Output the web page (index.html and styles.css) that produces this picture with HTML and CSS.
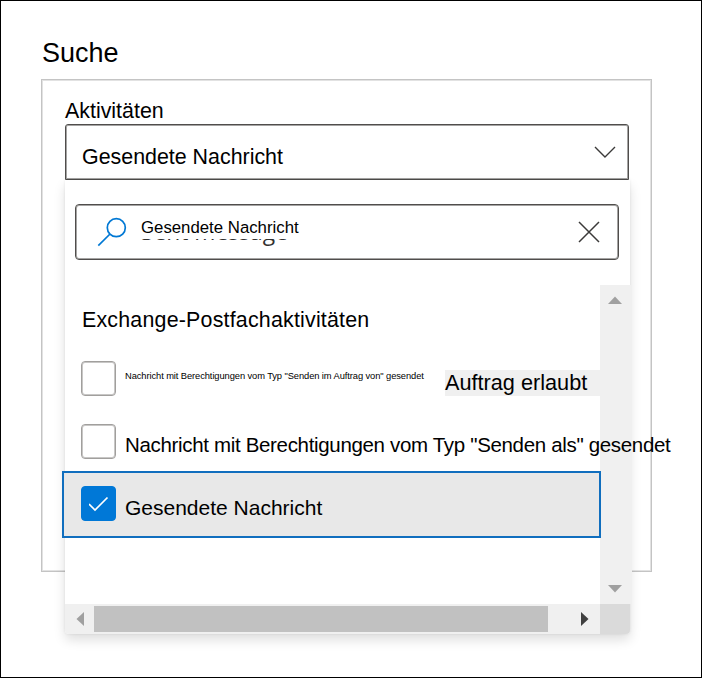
FILE: index.html
```html
<!DOCTYPE html>
<html lang="de">
<head>
<meta charset="utf-8">
<title>Suche</title>
<link rel="stylesheet" href="styles.css">
</head>
<body>
<main class="page">
  <h1 class="title">Suche</h1>
  <section class="card">
    <div class="label">Aktivitäten</div>
    <div class="field">
      <div class="select">
        <span class="select-value">Gesendete Nachricht</span>
        <svg class="chevron" width="22" height="12" viewBox="0 0 22 12"><path d="M1 1l10 10L21 1"/></svg>
      </div>
      <div class="menu">
        <div class="search">
          <svg class="lens" width="30" height="30" viewBox="0 0 30 30"><circle cx="19.3" cy="10.7" r="9"/><path d="M13 17L1.3 28.7"/></svg>
          <div class="search-text">
            <span class="query">Gesendete Nachricht</span>
            <span class="ghost"><span class="ghost-text">Sent message</span></span>
          </div>
          <svg class="close" width="22" height="22" viewBox="0 0 22 22"><path d="M1 1l20 20M21 1L1 21"/></svg>
        </div>
        <div class="body">
          <div class="list">
            <div class="group">Exchange-Postfachaktivitäten</div>
            <div class="row">
              <span class="box"></span>
              <span class="text small">Nachricht mit Berechtigungen vom Typ "Senden im Auftrag von" gesendet</span>
              <span class="tag">Auftrag erlaubt</span>
            </div>
            <div class="row">
              <span class="box"></span>
              <span class="text long">Nachricht mit Berechtigungen vom Typ "Senden als" gesendet</span>
            </div>
            <div class="row selected">
              <span class="box checked"><svg width="20" height="16" viewBox="0 0 20 16"><path d="M0 8l6 6L18.5 1.5"/></svg></span>
              <span class="text chosen">Gesendete Nachricht</span>
            </div>
          </div>
          <div class="vbar">
            <svg width="14" height="8" viewBox="0 0 14 8"><path d="M0 8L7 0.5L14 8z"/></svg>
            <svg width="14" height="8" viewBox="0 0 14 8"><path d="M0 0h14L7 7.5z"/></svg>
          </div>
        </div>
        <div class="hbar">
          <svg class="left" width="8" height="14" viewBox="0 0 8 14"><path d="M8 0v14L0.5 7z"/></svg>
          <div class="thumb"></div>
          <svg class="right" width="8" height="14" viewBox="0 0 8 14"><path d="M0 0v14L7.5 7z"/></svg>
          <div class="corner"></div>
        </div>
      </div>
    </div>
  </section>
</main>
</body>
</html>
```
FILE: styles.css
```css
* { box-sizing: border-box; }
body {
  margin: 0;
  background: #fff;
  color: #000;
  font-family: "Liberation Sans", Arial, sans-serif;
  font-size: 21.4px;
  white-space: nowrap;
}
svg { display: block; flex: none; fill: none; }
.page {
  height: 678px;
  border: 1px solid #000;
  padding: 37px 49px 0 40px;
  overflow: hidden;
}
.title {
  margin: 0 0 10px 1px;
  font-size: 27px;
  font-weight: 400;
  line-height: 31px;
}
.card {
  height: 493px;
  border: 1px solid #c4c4c4;
  box-shadow: inset 0 0 0 1px #e2e2e2;
  padding: 19px 22px 0 23px;
}
.label { height: 25px; line-height: 25px; }
.field { position: relative; }
.select {
  height: 56px;
  border: 1px solid #504e4c;
  box-shadow: inset 0 0 0 1px #a5a4a3;
  border-radius: 3px 3px 0 0;
  padding: 0 12px 0 16px;
  display: flex;
  justify-content: space-between;
}
.select-value { line-height: 64px; }
.chevron { margin-top: 21px; stroke: #3b3a39; stroke-width: 1.4; }
.menu {
  position: absolute;
  left: 0;
  top: 56px;
  width: 565px;
  height: 454px;
  background: #fff;
  border-radius: 0 0 4px 4px;
  box-shadow: 0 6px 12px rgba(0, 0, 0, .13), 0 0 3px rgba(0, 0, 0, .08);
}
.menu::before { content: ""; display: block; height: 24px; }
.search {
  margin: 0 11px 0 10px;
  height: 56px;
  border: 1px solid #504e4c;
  box-shadow: inset 0 0 0 1px #a5a4a3;
  border-radius: 4px;
  display: flex;
  padding: 0 18px 0 21px;
}
.lens { margin-top: 12px; stroke: #0078d4; stroke-width: 1.7; }
.search-text { margin-left: 14px; flex: 1; }
.query {
  display: block;
  height: 34px;
  font-size: 16.8px;
  line-height: 46px;
}
.ghost {
  display: block;
  height: 16px;
  overflow: hidden;
}
.ghost-text {
  display: block;
  margin-top: -7px;
  color: #323130;
  font: 22.8px/0 "Open Sans", sans-serif;
}
.close { margin-top: 16px; stroke: #3b3a39; stroke-width: 1.5; }
.body { display: flex; height: 319px; margin-top: 25px; }
.list { width: 535px; position: relative; z-index: 1; }
.group {
  height: 62px;
  padding-left: 17px;
  line-height: 70px;
  letter-spacing: .2px;
}
.row { display: flex; height: 63px; padding-left: 16px; }
.box {
  flex: none;
  width: 35px;
  height: 35px;
  margin-top: 14px;
  border: 1px solid #a19f9d;
  box-shadow: inset 0 0 0 1px #c8c7c6;
  border-radius: 4px;
  background: #fff;
}
.text { margin-left: 9px; line-height: 70px; }
.small {
  flex: none;
  width: 320px;
  font-size: 9.33px;
  letter-spacing: -.085px;
  line-height: 58px;
}
.long { font-size: 20.5px; letter-spacing: -.33px; }
.chosen { font-size: 21px; }
.tag {
  flex: 1;
  height: 26px;
  margin-top: 23px;
  background: #f0f0f0;
  font-size: 21.7px;
  line-height: 26px;
}
.selected {
  width: 539px;
  height: 67px;
  margin: -2px 0 0 -3px;
  border: 2px solid #106ebe;
  background: #e8e8e8;
  padding-left: 17px;
}
.selected .text { line-height: 69px; }
.selected .box { margin-top: 13px; }
.checked {
  background: #0078d7;
  border-color: #0078d7;
  box-shadow: none;
  display: flex;
  align-items: center;
  justify-content: center;
}
.checked svg { stroke: #fff; stroke-width: 1.7; }
.vbar {
  width: 32px;
  flex: none;
  background: #f0f0f0;
  display: flex;
  flex-direction: column;
  justify-content: space-between;
  padding: 11px 0 11px 8px;
}
.vbar svg { fill: #a0a0a0; }
.hbar {
  display: flex;
  align-items: center;
  height: 30px;
  background: #f0f0f0;
  border-radius: 0 0 4px 4px;
  overflow: hidden;
}
.left { margin: 0 10px 0 11px; fill: #a0a0a0; }
.thumb { width: 454px; height: 26px; background: #c1c1c1; }
.right { margin: 0 11px 0 33px; fill: #404040; }
.corner { flex: 1; height: 30px; background: #dadada; }
```
